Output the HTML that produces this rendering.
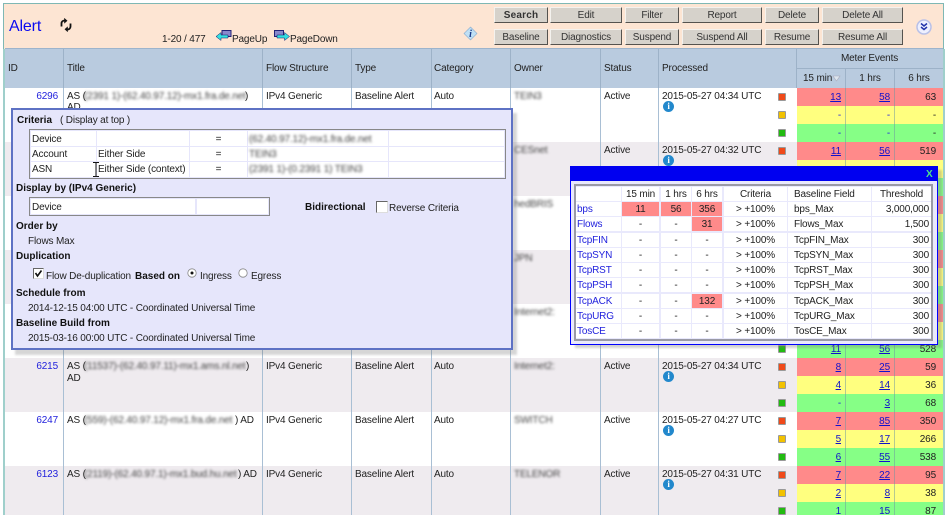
<!DOCTYPE html>
<html><head><meta charset="utf-8">
<style>
html,body{margin:0;padding:0;background:#fff}
#p{position:relative;width:948px;height:515px;overflow:hidden;background:#fff;font:10px/17px "Liberation Sans",sans-serif;letter-spacing:-.15px;color:#222;filter:blur(.35px)}
#p div,#p a,#p svg{position:absolute}
.t{white-space:nowrap}
.r{white-space:nowrap;text-align:right}
.b{font-weight:bold;color:#111;letter-spacing:0}
.c{white-space:nowrap;text-align:center}
a{color:#11c;text-decoration:underline}
.l{color:#2222dd}
.bl{filter:blur(1.3px);color:#444;white-space:nowrap}
.btn{background:#d6d2cb;border:1px solid;border-color:#f4f2ee #55534f #55534f #f4f2ee;box-sizing:border-box;height:16px;text-align:center;line-height:15px;color:#333}
.sq{width:6px;height:6px;border:1px solid #999;border-radius:1px}
.sr{background:#f04a1a}.sy{background:#f2c200}.sg{background:#22bb11}
.i{width:11px;height:11px;border-radius:50%;background:#2288cc;color:#fff;font:bold 9px/11px "Liberation Serif",serif;text-align:center}
.w{background:#fff}
.pc{background:#fff;height:14px}
</style></head><body><div id="p">

<!-- toolbar -->
<div style="left:3px;top:3px;width:941px;height:46px;background:#fde5d3;border:1px solid #7fb8b4;border-bottom:0;box-sizing:border-box"></div>
<div style="left:3px;top:49px;width:2px;height:466px;background:#9fcfcb"></div>
<div style="left:943px;top:49px;width:2px;height:466px;background:#9fcfcb"></div>
<div class="t" style="left:9px;top:18px;font-size:16px;line-height:18px;color:#0a0af0">Alert</div>
<svg style="left:59px;top:18px" width="14" height="14" viewBox="0 0 14 14" fill="none" stroke="#111" stroke-width="1.8"><path d="M2.5 8.5V5.5C2.5 3.5 4 2.5 6 2.5"/><path d="M11.500 5.500V8.500C11.500 10.500 10 11.500 8 11.500"/><path d="M5.500 .5V5L8 2.700Z" fill="#111" stroke-width=".6"/><path d="M8.500 9V13.500L6 11.300Z" fill="#111" stroke-width=".6"/></svg>
<div class="t" style="left:162px;top:31px">1-20 / 477</div>
<svg style="left:216px;top:30px" width="16" height="13" viewBox="0 0 16 13"><rect x="6" y="0.500" width="9" height="6" fill="#8888cc" stroke="#222277"/><path d="M0 6.500L5 2.500V5H12V8H5V10.500Z" fill="#33e0e0" stroke="#116" stroke-width=".5"/></svg>
<div class="t" style="left:232px;top:31px">PageUp</div>
<svg style="left:274px;top:30px" width="16" height="13" viewBox="0 0 16 13"><rect x="0.500" y="0.500" width="9" height="6" fill="#8888cc" stroke="#222277"/><path d="M15.500 6.500L10.500 2.500V5H3V8H10.500V10.500Z" fill="#33e0e0" stroke="#116" stroke-width=".5"/></svg>
<div class="t" style="left:290px;top:31px">PageDown</div>
<svg style="left:463px;top:26px" width="15" height="15" viewBox="0 0 15 15"><path d="M7.500 1L14 7.500L7.500 14L1 7.500Z" fill="#bfe0f5" stroke="#88aacc" stroke-width=".6"/><text x="7.500" y="11" font-family="Liberation Serif" font-size="10" font-style="italic" font-weight="bold" fill="#1a3a88" text-anchor="middle">i</text></svg>

<div class="btn b" style="left:494px;top:7px;width:54px;letter-spacing:.2px">Search</div>
<div class="btn" style="left:550px;top:7px;width:72px">Edit</div>
<div class="btn" style="left:625px;top:7px;width:54px">Filter</div>
<div class="btn" style="left:682px;top:7px;width:80px">Report</div>
<div class="btn" style="left:765px;top:7px;width:54px">Delete</div>
<div class="btn" style="left:822px;top:7px;width:81px">Delete All</div>
<div class="btn" style="left:494px;top:29px;width:54px">Baseline</div>
<div class="btn" style="left:550px;top:29px;width:72px">Diagnostics</div>
<div class="btn" style="left:625px;top:29px;width:54px">Suspend</div>
<div class="btn" style="left:682px;top:29px;width:80px">Suspend All</div>
<div class="btn" style="left:765px;top:29px;width:54px">Resume</div>
<div class="btn" style="left:822px;top:29px;width:81px">Resume All</div>
<svg style="left:916px;top:19px" width="16" height="16" viewBox="0 0 16 16"><circle cx="8" cy="8" r="7" fill="#eef0ff" stroke="#b8c0e8" stroke-width="1.500"/><path d="M5 4.500L8 7L11 4.500M5 8L8 10.500L11 8" fill="none" stroke="#2233aa" stroke-width="1.500"/></svg>

<!-- header -->
<div style="left:5px;top:49px;width:938px;height:39px;background:#b9cbdf"></div>
<div style="left:5px;top:48px;width:938px;height:1px;background:#9db4cc"></div>
<div style="left:63px;top:49px;width:1px;height:39px;background:#9db2c8"></div>
<div style="left:262px;top:49px;width:1px;height:39px;background:#9db2c8"></div>
<div style="left:351px;top:49px;width:1px;height:39px;background:#9db2c8"></div>
<div style="left:431px;top:49px;width:1px;height:39px;background:#9db2c8"></div>
<div style="left:510px;top:49px;width:1px;height:39px;background:#9db2c8"></div>
<div style="left:600px;top:49px;width:1px;height:39px;background:#9db2c8"></div>
<div style="left:658px;top:49px;width:1px;height:39px;background:#9db2c8"></div>
<div style="left:796px;top:49px;width:1px;height:39px;background:#9db2c8"></div>
<div style="left:796px;top:68px;width:147px;height:1px;background:#9db2c8"></div>
<div style="left:845px;top:69px;width:1px;height:19px;background:#9db2c8"></div>
<div style="left:894px;top:69px;width:1px;height:19px;background:#9db2c8"></div>
<div class="t" style="left:8px;top:60px">ID</div>
<div class="t" style="left:67px;top:60px">Title</div>
<div class="t" style="left:266px;top:60px">Flow Structure</div>
<div class="t" style="left:355px;top:60px">Type</div>
<div class="t" style="left:434px;top:60px">Category</div>
<div class="t" style="left:514px;top:60px">Owner</div>
<div class="t" style="left:604px;top:60px">Status</div>
<div class="t" style="left:662px;top:60px">Processed</div>
<div class="c" style="left:796px;top:50px;width:147px">Meter Events</div>
<div class="t" style="left:803px;top:70px">15 min</div>
<svg style="left:832px;top:75px" width="9" height="7" viewBox="0 0 9 7"><path d="M1 1H8L4.500 6Z" fill="#dde6ee" stroke="#aab" stroke-width=".6"/></svg>
<div class="c" style="left:846px;top:70px;width:48px">1 hrs</div>
<div class="c" style="left:895px;top:70px;width:48px">6 hrs</div>

<!-- row backgrounds -->
<div class="w" style="left:5px;top:88px;width:792px;height:54px"></div>
<div style="left:5px;top:142px;width:792px;height:54px;background:#efebef"></div>
<div style="left:5px;top:250px;width:792px;height:54px;background:#efebef"></div>
<div style="left:5px;top:358px;width:792px;height:54px;background:#efebef"></div>
<div style="left:5px;top:466px;width:792px;height:49px;background:#efebef"></div>
<!-- column lines -->
<div style="left:63px;top:88px;width:1px;height:427px;background:#a9bfd4"></div>
<div style="left:262px;top:88px;width:1px;height:427px;background:#a9bfd4"></div>
<div style="left:351px;top:88px;width:1px;height:427px;background:#a9bfd4"></div>
<div style="left:431px;top:88px;width:1px;height:427px;background:#a9bfd4"></div>
<div style="left:510px;top:88px;width:1px;height:427px;background:#a9bfd4"></div>
<div style="left:600px;top:88px;width:1px;height:427px;background:#a9bfd4"></div>
<div style="left:658px;top:88px;width:1px;height:427px;background:#a9bfd4"></div>

<!-- meter bands -->
<div style="left:797px;top:88px;width:146px;height:18px;background:#ff8a8a"></div>
<div style="left:797px;top:106px;width:146px;height:18px;background:#ffff7f"></div>
<div style="left:797px;top:124px;width:146px;height:18px;background:#86ff86"></div>
<div style="left:797px;top:142px;width:146px;height:18px;background:#ff8a8a"></div>
<div style="left:797px;top:160px;width:146px;height:18px;background:#ffff7f"></div>
<div style="left:797px;top:178px;width:146px;height:18px;background:#86ff86"></div>
<div style="left:797px;top:196px;width:146px;height:18px;background:#ff8a8a"></div>
<div style="left:797px;top:214px;width:146px;height:18px;background:#ffff7f"></div>
<div style="left:797px;top:232px;width:146px;height:18px;background:#86ff86"></div>
<div style="left:797px;top:250px;width:146px;height:18px;background:#ff8a8a"></div>
<div style="left:797px;top:268px;width:146px;height:18px;background:#ffff7f"></div>
<div style="left:797px;top:286px;width:146px;height:18px;background:#86ff86"></div>
<div style="left:797px;top:304px;width:146px;height:18px;background:#ff8a8a"></div>
<div style="left:797px;top:322px;width:146px;height:18px;background:#ffff7f"></div>
<div style="left:797px;top:340px;width:146px;height:18px;background:#86ff86"></div>
<div style="left:797px;top:358px;width:146px;height:18px;background:#ff8a8a"></div>
<div style="left:797px;top:376px;width:146px;height:18px;background:#ffff7f"></div>
<div style="left:797px;top:394px;width:146px;height:18px;background:#86ff86"></div>
<div style="left:797px;top:412px;width:146px;height:18px;background:#ff8a8a"></div>
<div style="left:797px;top:430px;width:146px;height:18px;background:#ffff7f"></div>
<div style="left:797px;top:448px;width:146px;height:18px;background:#86ff86"></div>
<div style="left:797px;top:466px;width:146px;height:18px;background:#ff8a8a"></div>
<div style="left:797px;top:484px;width:146px;height:18px;background:#ffff7f"></div>
<div style="left:797px;top:502px;width:146px;height:13px;background:#86ff86"></div>
<div style="left:845px;top:88px;width:1px;height:427px;background:rgba(110,150,160,.5)"></div>
<div style="left:894px;top:88px;width:1px;height:427px;background:rgba(110,150,160,.5)"></div>

<!-- row 1 -->
<div class="r l" style="left:20px;top:88px;width:38px">6296</div>
<div class="t" style="left:67px;top:88px">AS (</div><div class="bl" style="left:84px;top:88px">(2391 1)-(62.40.97.12)-mx1.fra.de.net</div><div class="t" style="left:245px;top:88px">)</div>
<div class="t" style="left:67px;top:99px">AD</div>
<div class="t" style="left:266px;top:88px">IPv4 Generic</div><div class="t" style="left:355px;top:88px">Baseline Alert</div><div class="t" style="left:434px;top:88px">Auto</div>
<div class="bl" style="left:514px;top:88px">TEIN3</div><div class="t" style="left:604px;top:88px">Active</div><div class="t" style="left:662px;top:88px">2015-05-27 04:34 UTC</div><div class="i" style="left:663px;top:101px">i</div>
<div class="sq sr" style="left:778px;top:93px"></div><div class="sq sy" style="left:778px;top:111px"></div><div class="sq sg" style="left:778px;top:129px"></div>
<a class="r" style="left:800px;top:89px;width:41px">13</a><a class="r" style="left:850px;top:89px;width:40px">58</a><div class="r" style="left:896px;top:89px;width:40px">63</div>
<div class="r l" style="left:800px;top:107px;width:41px">-</div><div class="r l" style="left:850px;top:107px;width:40px">-</div><div class="r" style="left:896px;top:107px;width:40px">-</div>
<div class="r l" style="left:800px;top:125px;width:41px">-</div><div class="r l" style="left:850px;top:125px;width:40px">-</div><div class="r" style="left:896px;top:125px;width:40px">-</div>
<!-- row 2 -->
<div class="bl" style="left:514px;top:142px">CESnet</div><div class="t" style="left:604px;top:142px">Active</div><div class="t" style="left:662px;top:142px">2015-05-27 04:32 UTC</div><div class="i" style="left:663px;top:155px">i</div>
<div class="sq sr" style="left:778px;top:147px"></div>
<a class="r" style="left:800px;top:143px;width:41px">11</a><a class="r" style="left:850px;top:143px;width:40px">56</a><div class="r" style="left:896px;top:143px;width:40px">519</div>
<!-- rows 3-5 owners -->
<div class="bl" style="left:514px;top:196px">hedBRIS</div>
<div class="bl" style="left:514px;top:250px">JPN</div>
<div class="bl" style="left:514px;top:304px">Internet2:</div>
<div class="sq sg" style="left:778px;top:345px"></div>
<!-- row 6 -->
<div class="r l" style="left:20px;top:358px;width:38px">6215</div>
<div class="t" style="left:67px;top:358px">AS (</div><div class="bl" style="left:84px;top:358px">(11537)-(62.40.97.11)-mx1.ams.nl.net</div><div class="t" style="left:246px;top:358px">)</div>
<div class="t" style="left:67px;top:370px">AD</div>
<div class="t" style="left:266px;top:358px">IPv4 Generic</div><div class="t" style="left:355px;top:358px">Baseline Alert</div><div class="t" style="left:434px;top:358px">Auto</div>
<div class="bl" style="left:514px;top:358px">Internet2:</div><div class="t" style="left:604px;top:358px">Active</div><div class="t" style="left:662px;top:358px">2015-05-27 04:34 UTC</div><div class="i" style="left:663px;top:371px">i</div>
<div class="sq sr" style="left:778px;top:363px"></div><div class="sq sy" style="left:778px;top:381px"></div><div class="sq sg" style="left:778px;top:399px"></div>
<a class="r" style="left:800px;top:359px;width:41px">8</a><a class="r" style="left:850px;top:359px;width:40px">25</a><div class="r" style="left:896px;top:359px;width:40px">59</div>
<a class="r" style="left:800px;top:377px;width:41px">4</a><a class="r" style="left:850px;top:377px;width:40px">14</a><div class="r" style="left:896px;top:377px;width:40px">36</div>
<div class="r l" style="left:800px;top:395px;width:41px">-</div><a class="r" style="left:850px;top:395px;width:40px">3</a><div class="r" style="left:896px;top:395px;width:40px">68</div>
<!-- row 7 -->
<div class="r l" style="left:20px;top:412px;width:38px">6247</div>
<div class="t" style="left:67px;top:412px">AS (</div><div class="bl" style="left:84px;top:412px">(559)-(62.40.97.12)-mx1.fra.de.net</div><div class="t" style="left:235px;top:412px">) AD</div>
<div class="t" style="left:266px;top:412px">IPv4 Generic</div><div class="t" style="left:355px;top:412px">Baseline Alert</div><div class="t" style="left:434px;top:412px">Auto</div>
<div class="bl" style="left:514px;top:412px">SWITCH</div><div class="t" style="left:604px;top:412px">Active</div><div class="t" style="left:662px;top:412px">2015-05-27 04:27 UTC</div><div class="i" style="left:663px;top:425px">i</div>
<div class="sq sr" style="left:778px;top:417px"></div><div class="sq sy" style="left:778px;top:435px"></div><div class="sq sg" style="left:778px;top:453px"></div>
<a class="r" style="left:800px;top:413px;width:41px">7</a><a class="r" style="left:850px;top:413px;width:40px">85</a><div class="r" style="left:896px;top:413px;width:40px">350</div>
<a class="r" style="left:800px;top:431px;width:41px">5</a><a class="r" style="left:850px;top:431px;width:40px">17</a><div class="r" style="left:896px;top:431px;width:40px">266</div>
<a class="r" style="left:800px;top:449px;width:41px">6</a><a class="r" style="left:850px;top:449px;width:40px">55</a><div class="r" style="left:896px;top:449px;width:40px">538</div>
<!-- row 8 -->
<div class="r l" style="left:20px;top:466px;width:38px">6123</div>
<div class="t" style="left:67px;top:466px">AS (</div><div class="bl" style="left:84px;top:466px">(2119)-(62.40.97.1)-mx1.bud.hu.net</div><div class="t" style="left:238px;top:466px">) AD</div>
<div class="t" style="left:266px;top:466px">IPv4 Generic</div><div class="t" style="left:355px;top:466px">Baseline Alert</div><div class="t" style="left:434px;top:466px">Auto</div>
<div class="bl" style="left:514px;top:466px">TELENOR</div><div class="t" style="left:604px;top:466px">Active</div><div class="t" style="left:662px;top:466px">2015-05-27 04:31 UTC</div><div class="i" style="left:663px;top:479px">i</div>
<div class="sq sr" style="left:778px;top:471px"></div><div class="sq sy" style="left:778px;top:489px"></div><div class="sq sg" style="left:778px;top:507px"></div>
<a class="r" style="left:800px;top:467px;width:41px">7</a><a class="r" style="left:850px;top:467px;width:40px">22</a><div class="r" style="left:896px;top:467px;width:40px">95</div>
<a class="r" style="left:800px;top:485px;width:41px">2</a><a class="r" style="left:850px;top:485px;width:40px">8</a><div class="r" style="left:896px;top:485px;width:40px">38</div>
<a class="r" style="left:800px;top:503px;width:41px">1</a><a class="r" style="left:850px;top:503px;width:40px">15</a><div class="r" style="left:896px;top:503px;width:40px">87</div>
<div class="r" style="left:896px;top:341px;width:40px">528</div>
<a class="r" style="left:800px;top:341px;width:41px">11</a><a class="r" style="left:850px;top:341px;width:40px">56</a>

<!-- criteria popup -->
<div style="left:15px;top:113px;width:502px;height:242px;background:rgba(120,120,120,.3);filter:blur(1px)"></div>
<div style="left:11px;top:108px;width:502px;height:242px;box-sizing:border-box;background:#e6e6fb;border:2px solid #5e72c4"></div>
<div class="t b" style="left:17px;top:112px">Criteria</div><div class="t" style="left:60px;top:112px">( Display at top )</div>
<div style="left:29px;top:129px;width:477px;height:50px;box-sizing:border-box;border:1px solid #888;background:#e6e6fb"></div>
<div class="w" style="left:31px;top:131px;width:65px;height:15px"></div><div class="w" style="left:97px;top:131px;width:92px;height:15px"></div><div class="w" style="left:190px;top:131px;width:57px;height:15px"></div><div class="w" style="left:248px;top:131px;width:140px;height:15px"></div><div class="w" style="left:389px;top:131px;width:115px;height:15px"></div>
<div class="w" style="left:31px;top:147px;width:65px;height:14px"></div><div class="w" style="left:97px;top:147px;width:92px;height:14px"></div><div class="w" style="left:190px;top:147px;width:57px;height:14px"></div><div class="w" style="left:248px;top:147px;width:140px;height:14px"></div><div class="w" style="left:389px;top:147px;width:115px;height:14px"></div>
<div class="w" style="left:31px;top:162px;width:65px;height:15px"></div><div class="w" style="left:97px;top:162px;width:92px;height:15px"></div><div class="w" style="left:190px;top:162px;width:57px;height:15px"></div><div class="w" style="left:248px;top:162px;width:140px;height:15px"></div><div class="w" style="left:389px;top:162px;width:115px;height:15px"></div>
<div class="t" style="left:32px;top:131px">Device</div><div class="c" style="left:190px;top:131px;width:57px">=</div><div class="bl" style="left:249px;top:131px">(62.40.97.12)-mx1.fra.de.net</div>
<div class="t" style="left:32px;top:146px">Account</div><div class="t" style="left:98px;top:146px">Either Side</div><div class="c" style="left:190px;top:146px;width:57px">=</div><div class="bl" style="left:249px;top:146px">TEIN3</div>
<div class="t" style="left:32px;top:161px">ASN</div><div class="t" style="left:98px;top:161px">Either Side (context)</div><div class="c" style="left:190px;top:161px;width:57px">=</div><div class="bl" style="left:249px;top:161px">(2391 1)-(0.2391 1) TEIN3</div>
<svg style="left:92px;top:162px" width="8" height="15" viewBox="0 0 8 15" fill="none" stroke="#111"><path d="M1 .5H3.500L4 1L4.500 .5H7M4 1V14M1 14.500H3.500L4 14L4.500 14.500H7"/></svg>
<div class="t b" style="left:16px;top:180px">Display by (IPv4 Generic)</div>
<div style="left:29px;top:197px;width:241px;height:19px;box-sizing:border-box;border:1px solid #888;background:#e6e6fb"></div>
<div class="w" style="left:31px;top:199px;width:164px;height:15px"></div><div class="w" style="left:197px;top:199px;width:71px;height:15px"></div>
<div class="t" style="left:32px;top:199px">Device</div>
<div class="t b" style="left:305px;top:199px">Bidirectional</div>
<div style="left:376px;top:201px;width:10px;height:10px;background:#fff;border:1px solid;border-color:#666 #ddd #ddd #666"></div>
<div class="t" style="left:389px;top:200px">Reverse Criteria</div>
<div class="t b" style="left:16px;top:218px">Order by</div>
<div class="t" style="left:28px;top:233px">Flows Max</div>
<div class="t b" style="left:16px;top:248px">Duplication</div>
<div style="left:33px;top:268px;width:9px;height:9px;background:#fff;border:1px solid;border-color:#666 #ddd #ddd #666"></div>
<svg style="left:33px;top:268px" width="11" height="11" viewBox="0 0 11 11"><path d="M2.500 5L4.500 8L8.500 2.500" fill="none" stroke="#111" stroke-width="1.600"/></svg>
<div class="t" style="left:46px;top:268px">Flow De-duplication</div>
<div class="t b" style="left:135px;top:268px">Based on</div>
<svg style="left:187px;top:268px" width="10" height="10" viewBox="0 0 10 10"><circle cx="5" cy="5" r="4.200" fill="#fff" stroke="#888" stroke-width=".8"/><circle cx="5" cy="5" r="1.500" fill="#111"/></svg>
<div class="t" style="left:200px;top:268px">Ingress</div>
<svg style="left:238px;top:268px" width="10" height="10" viewBox="0 0 10 10"><circle cx="5" cy="5" r="4.200" fill="#fff" stroke="#888" stroke-width=".8"/></svg>
<div class="t" style="left:251px;top:268px">Egress</div>
<div class="t b" style="left:16px;top:285px">Schedule from</div>
<div class="t" style="left:28px;top:300px">2014-12-15 04:00 UTC - Coordinated Universal Time</div>
<div class="t b" style="left:16px;top:315px">Baseline Build from</div>
<div class="t" style="left:28px;top:330px">2015-03-16 00:00 UTC - Coordinated Universal Time</div>

<!-- meter popup -->
<div style="left:575px;top:170px;width:367px;height:178px;background:rgba(120,120,120,.35);filter:blur(1px)"></div>
<div style="left:570px;top:166px;width:368px;height:179px;box-sizing:border-box;background:#e9e9fc;border:1px solid #00f"></div>
<div style="left:570px;top:166px;width:368px;height:15px;background:#0000f0"></div>
<div class="t" style="left:926px;top:166px;color:#4fe08a;font-weight:bold">X</div>
<div style="left:574px;top:184px;width:359px;height:157px;box-sizing:border-box;border:2px solid #9a9aa6;background:#e9e9fc"></div>

<div class="w" style="left:576px;top:187px;width:45px;height:14px"></div>
<div class="w" style="left:622px;top:187px;width:37px;height:14px"></div>
<div class="w" style="left:661px;top:187px;width:30px;height:14px"></div>
<div class="w" style="left:692px;top:187px;width:30px;height:14px"></div>
<div class="w" style="left:724px;top:187px;width:63px;height:14px"></div>
<div class="w" style="left:788px;top:187px;width:83px;height:14px"></div>
<div class="w" style="left:872px;top:187px;width:59px;height:14px"></div>
<div class="c" style="left:622px;top:186px;width:37px">15 min</div><div class="c" style="left:661px;top:186px;width:30px">1 hrs</div><div class="c" style="left:692px;top:186px;width:30px">6 hrs</div><div class="c" style="left:724px;top:186px;width:63px">Criteria</div><div class="t" style="left:794px;top:186px">Baseline Field</div><div class="c" style="left:872px;top:186px;width:59px">Threshold</div>

<div class="pc" style="left:576px;top:202px;width:355px;background:#fff"></div>
<div class="pc" style="left:576px;top:217px;width:355px"></div>
<div class="pc" style="left:576px;top:233px;width:355px"></div>
<div class="pc" style="left:576px;top:248px;width:355px"></div>
<div class="pc" style="left:576px;top:263px;width:355px"></div>
<div class="pc" style="left:576px;top:278px;width:355px"></div>
<div class="pc" style="left:576px;top:294px;width:355px"></div>
<div class="pc" style="left:576px;top:309px;width:355px"></div>
<div class="pc" style="left:576px;top:324px;width:355px"></div>
<div style="left:621px;top:187px;width:1px;height:151px;background:#e9e9fc"></div>
<div style="left:659px;top:187px;width:2px;height:151px;background:#e9e9fc"></div>
<div style="left:691px;top:187px;width:1px;height:151px;background:#e9e9fc"></div>
<div style="left:722px;top:187px;width:2px;height:151px;background:#e9e9fc"></div>
<div style="left:787px;top:187px;width:1px;height:151px;background:#e9e9fc"></div>
<div style="left:871px;top:187px;width:1px;height:151px;background:#e9e9fc"></div>

<div class="c" style="left:622px;top:202px;width:37px;height:14px;line-height:15px;background:#ff8a8a">11</div>
<div class="c" style="left:661px;top:202px;width:30px;height:14px;line-height:15px;background:#ff8a8a">56</div>
<div class="c" style="left:692px;top:202px;width:30px;height:14px;line-height:15px;background:#ff8a8a">356</div>
<div class="c" style="left:692px;top:217px;width:30px;height:14px;line-height:15px;background:#ff8a8a">31</div>
<div class="c" style="left:692px;top:294px;width:30px;height:14px;line-height:15px;background:#ff8a8a">132</div>

<div class="t l" style="left:577px;top:201px">bps</div><div class="t" style="left:794px;top:201px">bps_Max</div><div class="r" style="left:872px;top:201px;width:57px">3,000,000</div><div class="c" style="left:724px;top:201px;width:63px">&gt; +100%</div>
<div class="t l" style="left:577px;top:216px">Flows</div><div class="c" style="left:622px;top:216px;width:37px">-</div><div class="c" style="left:661px;top:216px;width:30px">-</div><div class="t" style="left:794px;top:216px">Flows_Max</div><div class="r" style="left:872px;top:216px;width:57px">1,500</div><div class="c" style="left:724px;top:216px;width:63px">&gt; +100%</div>
<div class="t l" style="left:577px;top:232px">TcpFIN</div><div class="c" style="left:622px;top:232px;width:37px">-</div><div class="c" style="left:661px;top:232px;width:30px">-</div><div class="c" style="left:692px;top:232px;width:30px">-</div><div class="t" style="left:794px;top:232px">TcpFIN_Max</div><div class="r" style="left:872px;top:232px;width:57px">300</div><div class="c" style="left:724px;top:232px;width:63px">&gt; +100%</div>
<div class="t l" style="left:577px;top:247px">TcpSYN</div><div class="c" style="left:622px;top:247px;width:37px">-</div><div class="c" style="left:661px;top:247px;width:30px">-</div><div class="c" style="left:692px;top:247px;width:30px">-</div><div class="t" style="left:794px;top:247px">TcpSYN_Max</div><div class="r" style="left:872px;top:247px;width:57px">300</div><div class="c" style="left:724px;top:247px;width:63px">&gt; +100%</div>
<div class="t l" style="left:577px;top:262px">TcpRST</div><div class="c" style="left:622px;top:262px;width:37px">-</div><div class="c" style="left:661px;top:262px;width:30px">-</div><div class="c" style="left:692px;top:262px;width:30px">-</div><div class="t" style="left:794px;top:262px">TcpRST_Max</div><div class="r" style="left:872px;top:262px;width:57px">300</div><div class="c" style="left:724px;top:262px;width:63px">&gt; +100%</div>
<div class="t l" style="left:577px;top:277px">TcpPSH</div><div class="c" style="left:622px;top:277px;width:37px">-</div><div class="c" style="left:661px;top:277px;width:30px">-</div><div class="c" style="left:692px;top:277px;width:30px">-</div><div class="t" style="left:794px;top:277px">TcpPSH_Max</div><div class="r" style="left:872px;top:277px;width:57px">300</div><div class="c" style="left:724px;top:277px;width:63px">&gt; +100%</div>
<div class="t l" style="left:577px;top:293px">TcpACK</div><div class="c" style="left:622px;top:293px;width:37px">-</div><div class="c" style="left:661px;top:293px;width:30px">-</div><div class="t" style="left:794px;top:293px">TcpACK_Max</div><div class="r" style="left:872px;top:293px;width:57px">300</div><div class="c" style="left:724px;top:293px;width:63px">&gt; +100%</div>
<div class="t l" style="left:577px;top:308px">TcpURG</div><div class="c" style="left:622px;top:308px;width:37px">-</div><div class="c" style="left:661px;top:308px;width:30px">-</div><div class="c" style="left:692px;top:308px;width:30px">-</div><div class="t" style="left:794px;top:308px">TcpURG_Max</div><div class="r" style="left:872px;top:308px;width:57px">300</div><div class="c" style="left:724px;top:308px;width:63px">&gt; +100%</div>
<div class="t l" style="left:577px;top:323px">TosCE</div><div class="c" style="left:622px;top:323px;width:37px">-</div><div class="c" style="left:661px;top:323px;width:30px">-</div><div class="c" style="left:692px;top:323px;width:30px">-</div><div class="t" style="left:794px;top:323px">TosCE_Max</div><div class="r" style="left:872px;top:323px;width:57px">300</div><div class="c" style="left:724px;top:323px;width:63px">&gt; +100%</div>

</div></body></html>
